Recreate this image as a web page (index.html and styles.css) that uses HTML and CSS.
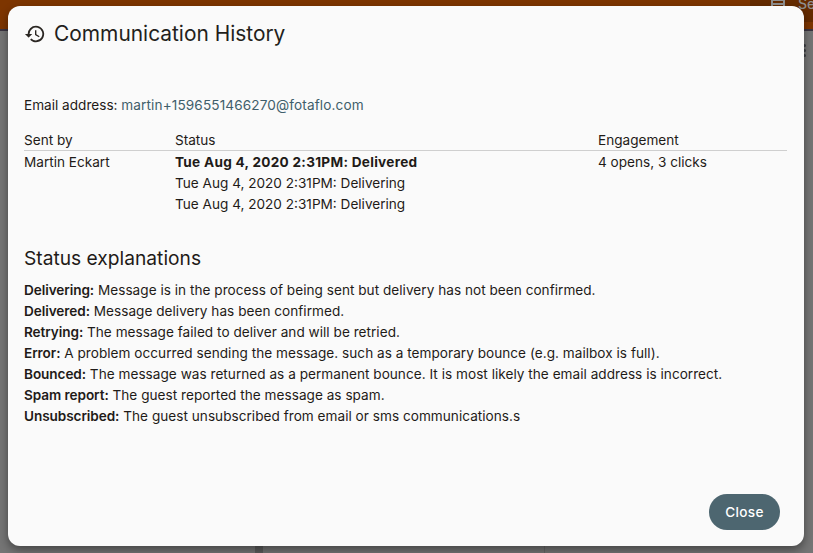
FILE: index.html
```html
<!DOCTYPE html>
<html lang="en">
<head>
<meta charset="utf-8">
<title>Communication History</title>
<link rel="stylesheet" href="styles.css">
</head>
<body>
<div class="backdrop">
  <div class="topbar">
    <div class="topbar-tab">
      <svg class="tab-icon" viewBox="0 0 14 14"><path d="M1 1h12v12H1z M1 5h12 M1 9h12" fill="none" stroke="#8f8f8f" stroke-width="2"/></svg>
      <span class="tab-label">Se</span>
    </div>
  </div>
  <div class="topline"></div>
  <div class="behind-text">Phone</div>
  <div class="behind-dots"><i></i><i></i><i></i></div>
  <div class="behind-panel"></div>
</div>
<section class="modal">
  <header class="modal-title">
    <svg class="history-icon" viewBox="0 0 24 24"><path d="M13 3a9 9 0 0 0-9 9H1l3.89 3.89.07.14L9 12H6a7 7 0 1 1 2.05 4.95l-1.42 1.42A9 9 0 1 0 13 3zm-1 5v5l4.28 2.54.72-1.21-3.5-2.08V8H12z" fill="#2a2622"/></svg>
    <h1>Communication History</h1>
  </header>
  <p class="email">Email address: <a>martin+1596551466270@fotaflo.com</a></p>
  <div class="table">
    <div class="row head"><span>Sent by</span><span>Status</span><span>Engagement</span></div>
    <div class="row first"><span>Martin Eckart</span><span class="strong">Tue Aug 4, 2020 2:31PM: Delivered</span><span>4 opens, 3 clicks</span></div>
    <div class="row"><span></span><span>Tue Aug 4, 2020 2:31PM: Delivering</span><span></span></div>
    <div class="row"><span></span><span>Tue Aug 4, 2020 2:31PM: Delivering</span><span></span></div>
  </div>
  <h2>Status explanations</h2>
  <ul class="explain">
    <li><b>Delivering:</b> Message is in the process of being sent but delivery has not been confirmed.</li>
    <li><b>Delivered:</b> Message delivery has been confirmed.</li>
    <li><b>Retrying:</b> The message failed to deliver and will be retried.</li>
    <li><b>Error:</b> A problem occurred sending the message. such as a temporary bounce (e.g. mailbox is full).</li>
    <li><b>Bounced:</b> The message was returned as a permanent bounce. It is most likely the email address is incorrect.</li>
    <li><b>Spam report:</b> The guest reported the message as spam.</li>
    <li><b>Unsubscribed:</b> The guest unsubscribed from email or sms communications.s</li>
  </ul>
  <footer class="actions"><button class="close">Close</button></footer>
</section>
</body>
</html>
```
FILE: styles.css
```css
* { box-sizing: border-box; }
html, body { margin: 0; height: 100%; }
body {
  width: 813px; height: 553px; overflow: hidden; position: relative;
  font-family: Inter, "Liberation Sans", sans-serif; color: #1f1b18;
  background: #757575;
}
.backdrop { position: absolute; inset: 0; }
.topbar { height: 29px; background: #7d3500; display: flex; justify-content: flex-end; }
.topbar-tab { width: 63px; height: 22px; background: #652b00; padding-left: 18px; display: flex; gap: 10px; align-items: flex-start; overflow: hidden; }
.tab-icon { display: block; width: 20px; height: 14px; margin-top: -5px; flex: none; }
.tab-label { font-size: 14px; font-weight: 500; line-height: 16px; margin-top: -4px; color: #8f8f8f; }
.topline { height: 2px; background: #3a3340; }
.behind-text { position: absolute; left: 75px; top: 533px; font-size: 13px; font-weight: 600; color: #111; }
.behind-dots { position: absolute; left: 803px; top: 44px; display: flex; flex-direction: column; gap: 2px; }
.behind-dots i { width: 3px; height: 3px; border-radius: 50%; background: #3c3f44; }
.behind-panel { position: absolute; left: 255px; top: 540px; width: 290px; height: 13px; border-left: 8px solid #5c5c5c; border-right: 1px solid #666; }
.modal {
  position: absolute; left: 8px; top: 6px; width: 796px; height: 540px;
  background: #fafafa; border-radius: 12px; padding: 0 17px 0 16px;
  box-shadow: 0 4px 10px rgba(0,0,0,.42);
  display: flex; flex-direction: column;
}
.modal-title { display: flex; align-items: center; gap: 8px; margin-top: 15px; height: 26px; }
.history-icon { width: 22px; height: 22px; flex: none; }
h1 { margin: 0; font-size: 20.9px; font-weight: 400; line-height: 26px; color: #231f1c; }
.email { margin: 48px 0 0; font-size: 13.6px; line-height: 20px; }
.email a { color: #3f5e6b; letter-spacing: .12px; }
.table { margin-top: 16px; font-size: 13.6px; line-height: 21px; }
.row { display: grid; grid-template-columns: 151px 423px 1fr; height: 21px; }
.head { height: 20px; border-bottom: 1px solid #cfcfcf; line-height: 19px; }
.first { height: 22px; line-height: 22px; }
.strong { font-weight: 700; letter-spacing: .28px; }
h2 { margin: 30px 0 0; font-size: 19.2px; font-weight: 400; line-height: 26px; }
.explain { list-style: none; margin: 9px 0 0; padding: 0; font-size: 13.6px; line-height: 21px; letter-spacing: .025px; }
.explain b { font-weight: 600; letter-spacing: -.08px; }
.actions { margin-top: auto; margin-right: 7px; margin-bottom: 16px; display: flex; justify-content: flex-end; }
.close {
  width: 71px; height: 36px; border: 0; border-radius: 18px; background: #4d6670;
  color: #fff; font: 500 13.6px Inter, "Liberation Sans", sans-serif; letter-spacing: .3px;
}
```
